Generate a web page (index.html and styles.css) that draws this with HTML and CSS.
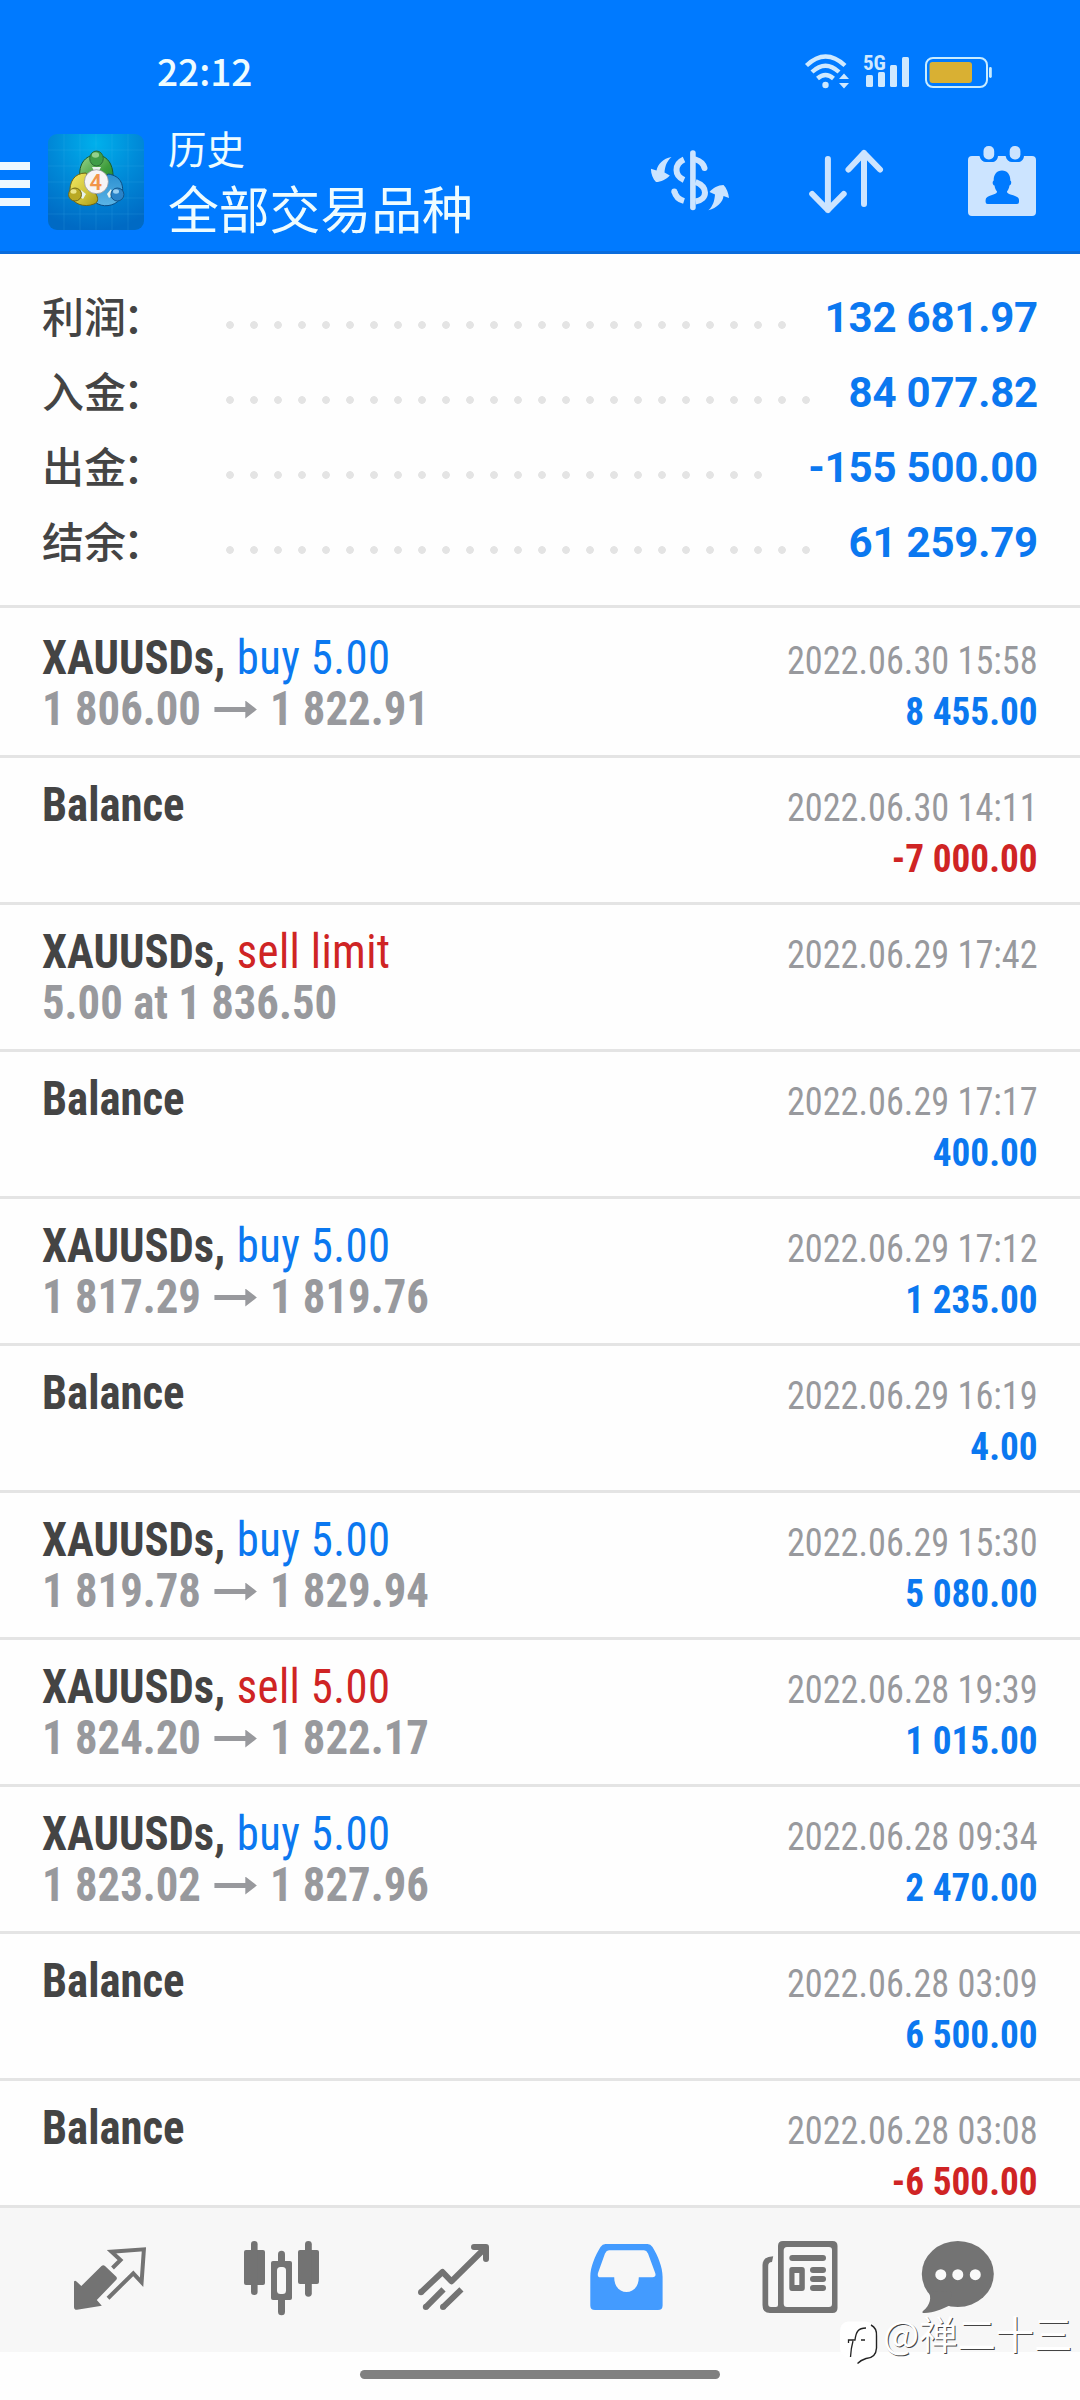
FILE: index.html
```html
<!DOCTYPE html>
<html lang="zh-CN">
<head>
<meta charset="utf-8">
<title>历史</title>
<link rel="stylesheet" href="styles.css">
</head>
<body>
<header class="header">
  <div class="status">
    <span class="clock">22:12</span>
    <div class="status-icons">
      <svg class="wifi" width="46" height="36" viewBox="0 0 46 36" fill="none" stroke="#cfe9ff" stroke-width="4.4">
        <path d="M1.500 11.500Q20.500-6.500 40 11.500M7 18Q20.500 5.500 34 18M12.500 24.500Q20.500 17.500 28.500 24.500"/>
        <circle cx="20.500" cy="31" r="3.200" fill="#cfe9ff" stroke="none"/>
        <path d="M34 25l5-5.500 5 5.500zM34 29l5 5.500 5-5.500z" fill="#cfe9ff" stroke="none"/>
      </svg>
      <div class="signal">
        <span class="net">5G</span>
        <svg width="44" height="32" viewBox="0 0 44 32" fill="#cfe9ff">
          <rect x="0" y="18" width="7" height="12" rx="1.500"/><rect x="12" y="15" width="7" height="15" rx="1.500"/><rect x="24" y="8" width="7" height="22" rx="1.500"/><rect x="36" y="0" width="7" height="30" rx="1.500"/>
        </svg>
      </div>
      <svg class="battery" width="68" height="32" viewBox="0 0 68 32">
        <rect x="1" y="1" width="61" height="29" rx="7" fill="none" stroke="#c9ecff" stroke-width="2"/>
        <rect x="4.500" y="5" width="42.500" height="21" rx="3" fill="#d9b033"/>
        <rect x="64" y="10" width="2.800" height="11" rx="1.400" fill="#c9ecff"/>
      </svg>
    </div>
  </div>
  <div class="appbar">
    <div class="menu"><i></i><i></i><i></i></div>
    <svg class="logo" width="96" height="96" viewBox="0 0 96 96">
      <defs>
        <radialGradient id="bg" cx=".5" cy=".1" r=".9"><stop offset="0" stop-color="#00b0ec"/><stop offset=".5" stop-color="#008ad8"/><stop offset="1" stop-color="#006ac4"/></radialGradient>
        <linearGradient id="g" x2="1" y2="1"><stop offset="0" stop-color="#9cd68e"/><stop offset=".6" stop-color="#3f9d3c"/><stop offset="1" stop-color="#1f8a2c"/></linearGradient>
        <linearGradient id="y" x2="1" y2="1"><stop offset="0" stop-color="#f3ea62"/><stop offset=".6" stop-color="#cfc23a"/><stop offset="1" stop-color="#a99a14"/></linearGradient>
        <linearGradient id="b" x2="0" y2="1"><stop offset="0" stop-color="#2b8fd0"/><stop offset="1" stop-color="#5ab4e6"/></linearGradient>
      </defs>
      <rect width="96" height="96" rx="9" fill="url(#bg)"/>
      <path d="M16 0V96M32 0V96M48 0V96M64 0V96M80 0V96M0 16H96M0 32H96M0 48H96M0 64H96M0 80H96" stroke="#4fc0ee" stroke-opacity=".16"/>
      <path d="M33 50C28 30 38 21 48 21C60 21 68 32 64 52Z" fill="url(#g)" stroke="#1c5a2a"/>
      <path d="M60 40C74 42 76 52 74 62C70 71 58 74 50 70C46 68 44 65 42 60Z" fill="url(#b)" stroke="#0b4c82"/>
      <path d="M38 39C26 39 21 48 22 60C24 70 36 74 46 70C51 68 50 64 48 60Z" fill="url(#y)" stroke="#6c6414"/>
      <path d="M44 33H53L51 37H46ZM33 56L38 60L35 65L31 62ZM63 55L59 60L61 64L65 61Z" fill="#e8f3ee"/>
      <ellipse cx="48.500" cy="24.500" rx="6.800" ry="7.500" fill="#3f9d48" stroke="#2a6c35"/><ellipse cx="47.500" cy="21" rx="3.600" ry="2.700" fill="#93d08c"/>
      <circle cx="27" cy="60.500" r="6.500" fill="#b9a924" stroke="#736a18"/><ellipse cx="25.500" cy="57.500" rx="3" ry="2.200" fill="#ece58a"/>
      <circle cx="69.400" cy="60.500" r="6.500" fill="#2a83c8" stroke="#12568c"/><ellipse cx="68" cy="57.500" rx="3" ry="2.200" fill="#9ad0f2"/>
      <circle cx="48.400" cy="47.700" r="12" fill="#f6f4f5" stroke="#8d8f95" stroke-width=".7"/>
      <text x="47.800" y="55.500" text-anchor="middle" class="four">4</text>
    </svg>
    <div class="titles">
      <div class="sub">历史</div>
      <div class="main">全部交易品种</div>
    </div>
    <div class="actions">
      <svg width="84" height="80" viewBox="0 0 84 80" fill="none" stroke="#cce4ff" stroke-width="6">
        <path d="M44.900 13V67.500" stroke-width="5.600" stroke-linecap="round"/>
        <path d="M47.500 19.500C52.500 21 55.500 24 56.500 28" stroke-linecap="round"/>
        <path d="M47.500 42C54 44.500 57 48 57 52.500C57 57 53.500 60.500 47.500 61.500"/>
        <path d="M36 19.500C30.500 22 28.500 25.500 28.500 30C28.500 34.500 31.500 38 36 40"/>
        <path d="M26.500 51.700C27.500 56 31 59.500 36 61"/><circle cx="26.300" cy="51.500" r="3" fill="#cce4ff" stroke="none"/>
        <g fill="#cce4ff" stroke="none"><path d="M23.500 17C15 18.500 10 24 8.500 30.500L2.900 28.700C3 34 5 39 8 42C13 42 18 39.500 21.800 35.500L16.500 32.500C17 26 19 21 23.500 17Z"/><path d="M60.400 70.300C69 68 75 62 75.500 56L81 58C80.500 53 78.500 48 75.500 45C70 45 65 48 61.500 52L67 54.500C66.500 61 65 66 60.400 70.300Z"/></g>
      </svg>
      <svg width="84" height="80" viewBox="0 0 84 80" fill="none" stroke="#cce4ff" stroke-width="6" stroke-linecap="round" stroke-linejoin="round"><path d="M23.900 19V70M8.200 54L23.900 70L39.700 54M60 64V13M44.500 29.500L60 13L76 29.500"/></svg>
      <svg width="76" height="80" viewBox="0 0 76 80" fill="#cce4ff">
        <path d="M8 16H15.500C16.500 20 19 22 22 22H28C31 22 33.500 20 34 16H41.600C42.500 20 45 22 48 22H54C57 22 59.500 20 60 16H68Q72 16 72 20V72Q72 76 68 76H8Q4 76 4 72V20Q4 16 8 16Z"/>
        <rect x="19.500" y="6" width="10.700" height="13.500" rx="5"/><rect x="45.700" y="6" width="10.700" height="13.500" rx="5"/>
        <path fill="#007aff" d="M38 30.500C43.500 30.500 46.500 35 46.300 40.500C48 41.500 47.200 45 45.500 45.500C45 49 43.500 50.500 43 51.500C42.500 55.500 55 54.500 55 60V62Q55 64 53 64H23.600Q21.600 64 21.600 62V60C21.600 54.500 33.500 55.500 33 51.500C32 50 31 49 30.500 45.500C28.500 45 28 41.500 29.700 40.500C29.500 35 32.500 30.500 38 30.500Z"/>
      </svg>
    </div>
  </div>
</header>

<section class="summary">
  <div class="line"><span class="label">利润<span class="colon">：</span></span><span class="dots" style="--n:24"></span><span class="value">132 681.97</span></div>
  <div class="line"><span class="label">入金<span class="colon">：</span></span><span class="dots" style="--n:25"></span><span class="value">84 077.82</span></div>
  <div class="line"><span class="label">出金<span class="colon">：</span></span><span class="dots" style="--n:23"></span><span class="value">-155 500.00</span></div>
  <div class="line"><span class="label">结余<span class="colon">：</span></span><span class="dots" style="--n:25"></span><span class="value">61 259.79</span></div>
</section>

<main class="list">
  <div class="row"><div class="left"><div class="sym"><b>XAUUSDs,</b> <span class="buy">buy 5.00</span></div><div class="price">1 806.00<i class="arrow"></i>1 822.91</div></div><div class="right"><div class="date">2022.06.30 15:58</div><div class="amt">8 455.00</div></div></div>
  <div class="row"><div class="left"><div class="sym"><b>Balance</b></div></div><div class="right"><div class="date">2022.06.30 14:11</div><div class="amt neg">-7 000.00</div></div></div>
  <div class="row"><div class="left"><div class="sym"><b>XAUUSDs,</b> <span class="sell">sell limit</span></div><div class="price">5.00 at 1 836.50</div></div><div class="right"><div class="date">2022.06.29 17:42</div></div></div>
  <div class="row"><div class="left"><div class="sym"><b>Balance</b></div></div><div class="right"><div class="date">2022.06.29 17:17</div><div class="amt">400.00</div></div></div>
  <div class="row"><div class="left"><div class="sym"><b>XAUUSDs,</b> <span class="buy">buy 5.00</span></div><div class="price">1 817.29<i class="arrow"></i>1 819.76</div></div><div class="right"><div class="date">2022.06.29 17:12</div><div class="amt">1 235.00</div></div></div>
  <div class="row"><div class="left"><div class="sym"><b>Balance</b></div></div><div class="right"><div class="date">2022.06.29 16:19</div><div class="amt">4.00</div></div></div>
  <div class="row"><div class="left"><div class="sym"><b>XAUUSDs,</b> <span class="buy">buy 5.00</span></div><div class="price">1 819.78<i class="arrow"></i>1 829.94</div></div><div class="right"><div class="date">2022.06.29 15:30</div><div class="amt">5 080.00</div></div></div>
  <div class="row"><div class="left"><div class="sym"><b>XAUUSDs,</b> <span class="sell">sell 5.00</span></div><div class="price">1 824.20<i class="arrow"></i>1 822.17</div></div><div class="right"><div class="date">2022.06.28 19:39</div><div class="amt">1 015.00</div></div></div>
  <div class="row"><div class="left"><div class="sym"><b>XAUUSDs,</b> <span class="buy">buy 5.00</span></div><div class="price">1 823.02<i class="arrow"></i>1 827.96</div></div><div class="right"><div class="date">2022.06.28 09:34</div><div class="amt">2 470.00</div></div></div>
  <div class="row"><div class="left"><div class="sym"><b>Balance</b></div></div><div class="right"><div class="date">2022.06.28 03:09</div><div class="amt">6 500.00</div></div></div>
  <div class="row"><div class="left"><div class="sym"><b>Balance</b></div></div><div class="right"><div class="date">2022.06.28 03:08</div><div class="amt neg">-6 500.00</div></div></div>
</main>

<nav class="tabs">
  <svg viewBox="0 0 96 96" fill="none" stroke="#737373" stroke-width="4">
    <path d="M12 49.500Q13 48 14.500 49.500L19.300 54L39.500 34Q41.300 32.300 43 34L54.300 44.800Q55.500 46.300 54.300 47.800L34.800 68L39.800 73.800L15 77.800Q12 78 12 75Z" fill="#737373" stroke="none"/>
    <path d="M50.500 36L58.500 28L49.500 19.700L81.900 17.300L79.600 50.300L71.300 41.300L46 66.200"/>
  </svg>
  <svg viewBox="0 0 96 96" fill="#737373">
    <rect x="10" y="18" width="21" height="35" rx="2"/><rect x="17" y="9" width="6.600" height="54" rx="3.300"/>
    <rect x="64" y="18" width="21" height="34" rx="2"/><rect x="71" y="9" width="6.800" height="55.700" rx="3.400"/>
    <rect x="37" y="29" width="21" height="39" rx="2"/><rect x="44" y="18.700" width="7" height="64.500" rx="3.500"/><rect x="43" y="35" width="9" height="27" rx="3.500" fill="#f7f7f7"/>
  </svg>
  <svg viewBox="0 0 96 96" fill="none" stroke="#737373" stroke-width="6">
    <path d="M15.300 60L36.500 40L45.400 49.300L80.200 15" stroke-linejoin="round"/><path d="M68 15H80V27" stroke-linecap="round" stroke-linejoin="round"/>
    <path d="M19.600 75.300L37.500 57.300M36.800 75.300L55.400 57.300"/>
    <g fill="#737373" stroke="none"><circle cx="15" cy="60.300" r="3"/><circle cx="19.800" cy="75" r="3"/><circle cx="37" cy="75" r="3"/></g>
  </svg>
  <svg viewBox="0 0 96 96" fill="#439bff">
    <path fill-rule="evenodd" d="M27.500 12H69.500Q72.500 12 74.500 15C80 24 84.600 35 84.600 45V73.500Q84.600 78 80 78H17Q12.300 78 12.300 73.500V45C12.300 35 17 24 22.500 15Q24.500 12 27.500 12ZM31 18.300Q28.500 18.300 27 21.500L20 41Q19 45.300 22.500 45.300H36.200C36.200 65 60.800 65 60.800 45.300H74.500Q78.500 45.300 77.200 41L70 21.500Q68.500 18.300 66 18.300Z"/>
  </svg>
  <svg viewBox="0 0 96 96" fill="#737373">
    <path fill-rule="evenodd" d="M33 9H82.500Q87.500 9 87.500 14V76Q87.500 81 82.500 81H20Q12.500 81 12.500 73V33Q12.500 24.500 23.200 24.200L22 30Q18.200 30 18.200 34V72Q18.200 75 21 75H26Q28 75 28 73V14Q28 9 33 9ZM37 15Q33.700 15 33.700 18.500V71.500Q33.700 75 37 75H79Q82 75 82 72V18Q82 15 79 15Z"/>
    <rect x="39.300" y="23" width="36.700" height="6" rx="3"/><path fill-rule="evenodd" d="M42 35H52Q54.800 35 54.800 38V56Q54.800 59 52 59H42Q39.300 59 39.300 56V38Q39.300 35 42 35ZM44.500 41V53H49.300V41Z"/>
    <rect x="60" y="35" width="16" height="6" rx="3"/><rect x="60" y="44" width="16" height="6" rx="3"/><rect x="60" y="53" width="16" height="6" rx="3"/>
  </svg>
  <svg viewBox="0 0 96 96" fill="#737373">
    <ellipse cx="35.800" cy="42" rx="36" ry="33"/><path d="M6 59C10 65 8.500 73 1 79Q-1 81 2.500 81C12 80.500 20 77.500 27 73.800L30 60Z"/>
    <g fill="#f9f9f9"><circle cx="18.800" cy="42.700" r="5.500"/><circle cx="35.800" cy="42.700" r="5.500"/><circle cx="53.300" cy="42.700" r="5.500"/></g>
  </svg>
</nav>
<footer class="home"><span></span></footer>

<div class="mark">
  <svg width="42" height="46" viewBox="0 0 42 46">
    <path d="M9 1.500H27Q37.500 3 37.500 14V28Q37 38 27 38.500Q22 40 18.500 43L20 38.500H9Q1 36 1 28V12Q1 2.500 9 1.500Z" fill="#fff"/>
    <path d="M32 5Q38 8 37.500 16V28Q37 38 27 38.500Q22 40 18.500 43.500" fill="none" stroke="#222" stroke-width="1.400"/>
    <path d="M27 8C19 8 17 12 16 20H9.500V23M22 20H26M14 21Q12 28 11.500 37" fill="none" stroke="#222" stroke-width="1.300"/>
  </svg>
  <span>@禅二十三</span>
</div>
</body>
</html>
```
FILE: styles.css
```css
* { box-sizing: border-box; }
body {
  margin: 0;
  width: 1080px;
  height: 2400px;
  overflow: hidden;
  position: relative;
  display: flex;
  flex-direction: column;
  background: #fefefe;
  font-family: Roboto, "Noto Sans CJK SC", sans-serif;
}
svg { display: block; flex: none; overflow: visible; }

/* header */
.header { height: 254px; flex: none; background: #007aff; border-bottom: 3px solid #0a6cdc; color: #eefcff; }
.status { height: 124px; padding: 49px 87px 0 157px; display: flex; justify-content: space-between; align-items: flex-start; }
.clock { font: 500 37px/42px "Noto Sans CJK SC", sans-serif; }
.status-icons { display: flex; align-items: flex-start; padding-top: 3px; }
.wifi { margin-top: 2px; margin-right: 12px; }
.signal { display: flex; align-items: flex-start; padding-top: 5px; }
.signal svg { margin-left: -19px; margin-right: 15px; }
.net { width: 22px; margin-top: -4px; font: 700 21px/21px Roboto, sans-serif; font-stretch: 75%; color: #cfe9ff; }
.battery { margin-top: 5px; }

.appbar { display: flex; align-items: flex-start; height: 127px; }
.menu { width: 30px; margin: 38px 18px 0 0; display: flex; flex-direction: column; gap: 10px; }
.menu i { height: 8px; background: #eef8ff; }
.logo { margin-top: 10px; }
.four { font: 600 22px Roboto, sans-serif; fill: #f2954a; }
.titles { margin-left: 24px; margin-top: -2px; font-family: "Noto Sans CJK SC", sans-serif; }
.sub { font-size: 38.500px; line-height: 50px; }
.main { font-size: 50.800px; line-height: 60px; margin-top: 5px; }
.actions { margin-left: auto; display: flex; padding: 16px 40px 0 0; }
.actions svg:nth-child(2) { margin: 0 76px 0 72px; }

/* totals */
.summary { height: 354px; flex: none; padding: 26px 42px 0; border-bottom: 3px solid #e4e4e4; }
.line { display: flex; height: 75px; align-items: center; }
.label { width: 176px; margin-top: -6px; color: #444; font: 500 42px/75px "Noto Sans CJK SC", sans-serif; }
.colon { margin-left: -3px; }
.dots {
  width: calc(var(--n) * 24px);
  height: 8px;
  margin-top: 15px;
  background: radial-gradient(circle, #e4e4e4 3.500px, transparent 4.200px) 0 0 / 24px 8px repeat-x;
}
.value { margin-left: auto; font-size: 42px; font-weight: 700; letter-spacing: -.2px; color: #0b78f0; }

/* history rows; the text is set a little narrower than the condensed face */
.list { flex: 1; min-height: 0; overflow: hidden; padding-top: 3px; font-family: "Roboto Condensed", Roboto, sans-serif; font-stretch: 75%; }
.row { height: 147px; border-bottom: 3px solid #e4e4e4; padding: 21px 42px 0; display: flex; justify-content: space-between; white-space: nowrap; }
.sym, .price { font-size: 48px; line-height: 51px; transform: scaleX(.932); transform-origin: left; }
.sym { color: #444; }
.price { font-weight: 700; color: #98999d; display: flex; align-items: center; }
.buy, .sell { margin-left: 1.500px; letter-spacing: .4px; }
.buy { color: #0b78f0; }
.sell { color: #cf2424; }
.right { text-align: right; font-size: 39px; line-height: 51px; padding-top: 4px; }
.date { color: #98999d; transform: scaleX(.93); transform-origin: right; }
.amt { font-weight: 700; color: #0b78f0; transform: scaleX(.955); transform-origin: right; }
.neg { color: #cf2424; }
.arrow { width: 46px; height: 18px; margin: 2px 14px 0 14px; background: #98999d; clip-path: polygon(0 36%, 73% 36%, 73% 0, 100% 50%, 73% 100%, 73% 64%, 0 64%); }

/* bottom navigation */
.tabs { height: 147px; flex: none; background: #f7f7f7; border-top: 3px solid #e4e4e4; display: flex; gap: 76px; align-items: center; padding-left: 62px; }
.tabs svg { width: 96px; height: 96px; }
.home { height: 48px; flex: none; background: #fefefe; display: flex; justify-content: center; padding-top: 18px; }
.home span { width: 360px; height: 9px; border-radius: 5px; background: #808080; }

.mark { position: absolute; left: 839px; top: 2308px; display: flex; align-items: flex-start; color: #fff; font: 400 38.300px/50px "Noto Sans CJK SC", sans-serif; text-shadow: 1px 1px 0 #444; white-space: nowrap; }
.mark svg { margin: 12px 2px 0 0; }
```
